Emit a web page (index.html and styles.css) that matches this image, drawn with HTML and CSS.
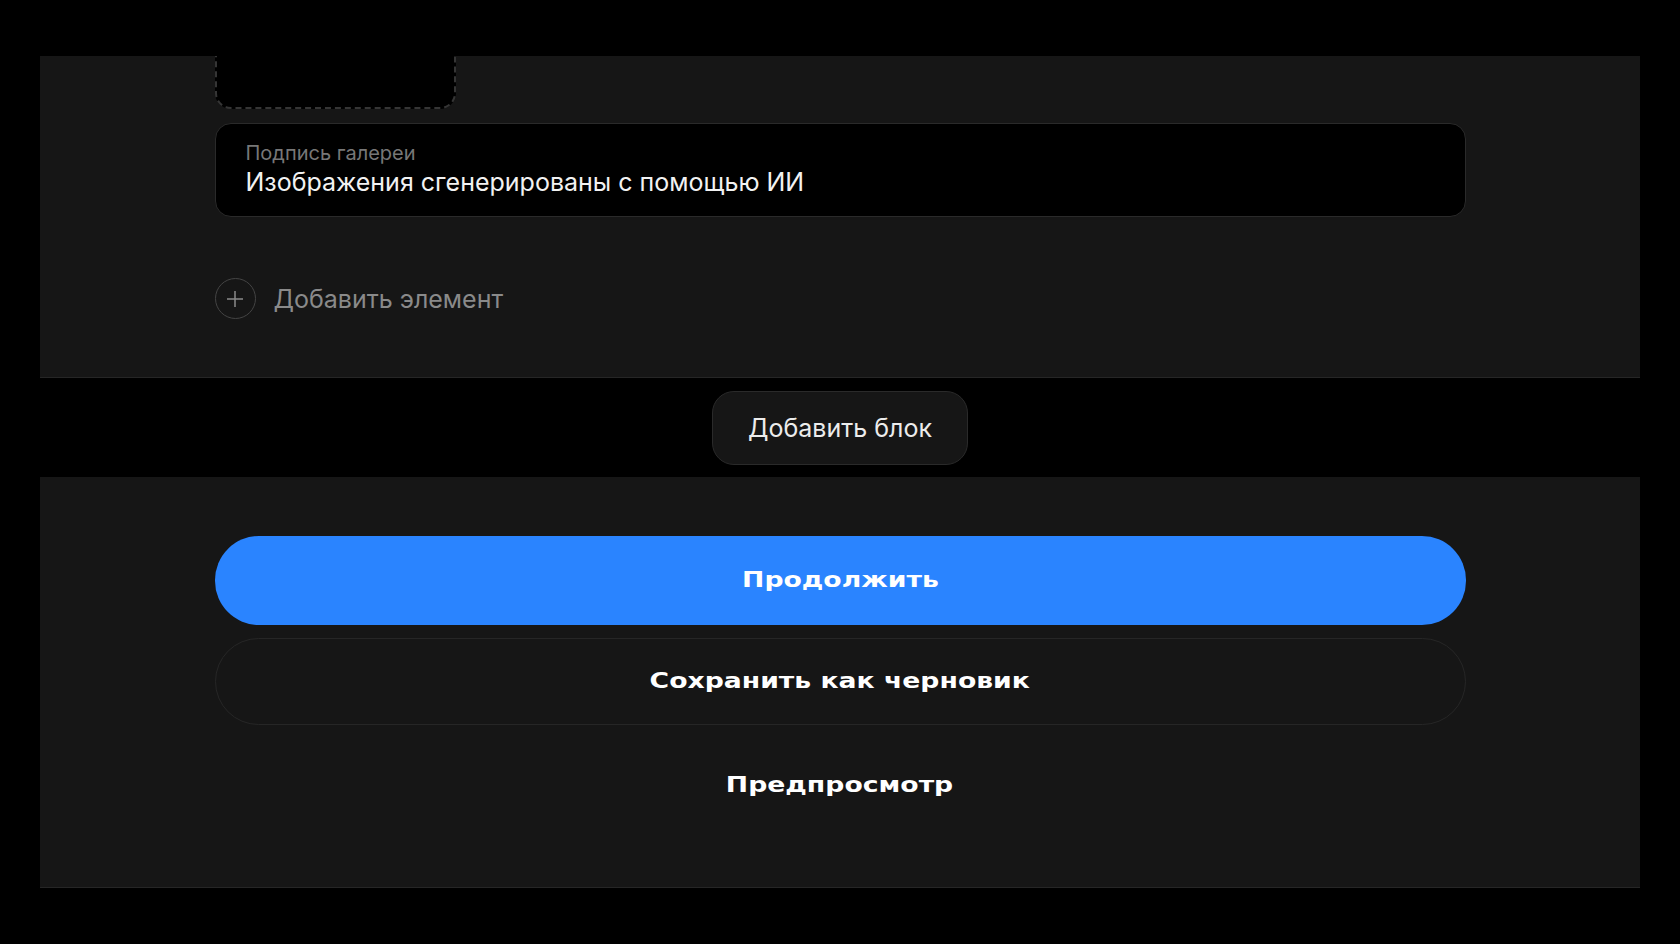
FILE: index.html
```html
<!DOCTYPE html>
<html>
<head>
  <meta charset="utf-8">
  <title>Редактор галереи</title>
  <link rel="stylesheet" href="styles.css">
</head>
<body>

<div class="top-space"></div>

<div class="panel editor">
  <div class="column">
    <div class="drop-zone"></div>

    <div class="field">
      <div class="field-label">Подпись галереи</div>
      <div class="field-value">Изображения сгенерированы с помощью ИИ</div>
    </div>

    <div class="add-item">
      <span class="add-circle">
        <svg width="18" height="18" viewBox="0 0 18 18">
          <path d="M9 1v16M1 9h16" stroke="#8a8a8a" stroke-width="1.5" fill="none"/>
        </svg>
      </span>
      <span class="add-text">Добавить элемент</span>
    </div>
  </div>
</div>

<div class="block-row">
  <button class="add-block">Добавить блок</button>
</div>

<div class="panel actions">
  <div class="column">
    <button class="btn btn-primary"><span class="wide">Продолжить</span></button>
    <button class="btn btn-outline"><span class="wide">Сохранить как черновик</span></button>
    <button class="btn btn-plain"><span class="wide">Предпросмотр</span></button>
  </div>
</div>

</body>
</html>
```

FILE: styles.css
```css
body {
  margin: 0;
  background: #000;
  font-family: Inter, "Noto Sans", sans-serif;
  color: #f0f0f0;
}

.top-space {
  height: 56px;
}

.panel {
  margin: 0 40px;
  background: #161616;
  border-bottom: solid 1px #262626;
}

.column {
  width: 1251px;
  margin: 0 auto;
}

.editor {
  height: 321px;
  overflow: hidden;
}

.drop-zone {
  height: 200px;
  width: 237px;
  margin-top: -151px;
  background: #000;
  border: dashed 2px #353535;
  border-radius: 16px;
}

.field {
  margin-top: 14px;
  height: 94px;
  box-sizing: border-box;
  padding: 16px 30px 0;
  background: #000;
  border: solid 1px #2a2a2a;
  border-radius: 16px;
}

.field-label {
  font-size: 20px;
  line-height: 26px;
  color: #777;
}

.field-value {
  font-size: 25px;
  line-height: 32px;
  color: #f2f2f2;
}

.add-item {
  display: flex;
  align-items: center;
  gap: 18px;
  margin-top: 61px;
}

.add-circle {
  width: 39px;
  height: 39px;
  border: solid 1px #444;
  border-radius: 50%;
  display: flex;
  align-items: center;
  justify-content: center;
}

.add-text {
  font-size: 25px;
  color: #8a8a8a;
}

.block-row {
  display: flex;
  justify-content: center;
  padding: 13px 0 12px;
}

.add-block {
  width: 256px;
  height: 74px;
  background: #161616;
  border: solid 1px #2a2a2a;
  border-radius: 22px;
  color: #ececec;
  font-family: Inter, "Noto Sans", sans-serif;
  font-size: 25px;
}

.actions {
  height: 410px;
}

.actions .column {
  padding-top: 59px;
  display: flex;
  flex-direction: column;
  gap: 13px;
}

.btn {
  height: 88px;
  border-radius: 44px;
  border: solid 1px transparent;
  background: none;
  color: #fff;
  font-family: "DejaVu Sans", sans-serif;
  font-weight: bold;
  font-size: 21px;
}

.wide {
  display: inline-block;
  transform: scaleX(1.27);
}

.btn-primary {
  height: 89px;
  padding-bottom: 3px;
  background: #2a84ff;
}

.btn-outline {
  height: 87px;
  padding-bottom: 2px;
  border-color: #262626;
}

.btn-plain {
  height: 94px;
  padding-bottom: 2px;
}
```
